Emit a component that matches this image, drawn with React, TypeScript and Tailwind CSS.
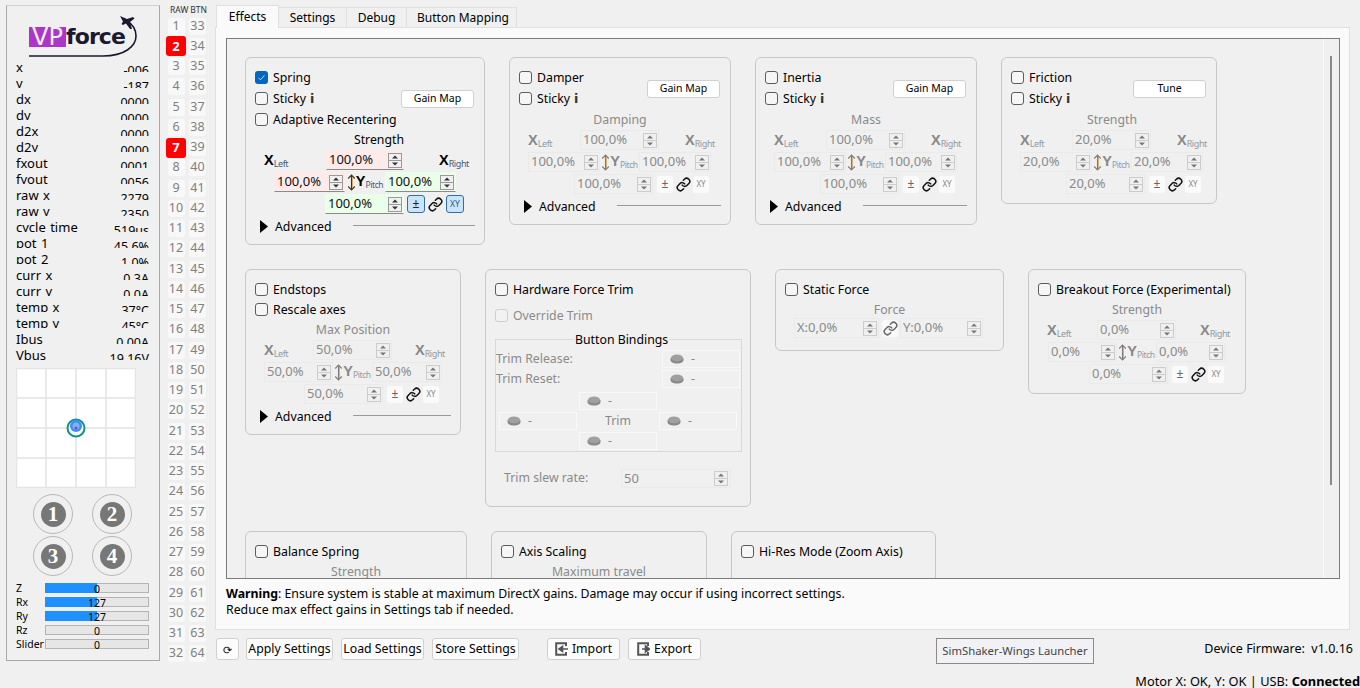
import React from "react";
import { Link } from "lucide-react";

const telemetry: [string, string][] = [
  ["x", "-006"], ["y", "-187"], ["dx", "0000"], ["dy", "0000"], ["d2x", "0000"], ["d2y", "0000"],
  ["fxout", "0001"], ["fyout", "0056"], ["raw x", "2279"], ["raw y", "2350"], ["cycle time", "519us"],
  ["pot 1", "45.6%"], ["pot 2", "1.0%"], ["curr x", "0.3A"], ["curr y", "0.0A"], ["temp x", "37°C"],
  ["temp y", "45°C"], ["Ibus", "0.00A"], ["Vbus", "19.16V"],
];

function Logo() {
  return (
    <div className="relative h-[50px] w-full">
      <svg className="absolute left-[20px] top-[8px]" width="120" height="46" viewBox="0 0 120 46">
        <path d="M2 42 H76 C98 42 109 32 109 22 C109 15 105 10 100 7" fill="none" stroke="#1c1830" strokeWidth="1.6" />
        <path d="M93 2 L100 5 L106 3 L107.5 4.5 L103 8 L105 15 L103 15 L99 9.5 L96 11 L94.5 10 L96 7.5 Z" fill="#1c1830" />
      </svg>
      <div className="absolute left-[22px] top-[21px] flex items-center">
        <span className="h-[20px] w-[37px] overflow-hidden bg-[#ad36c9] text-center font-['DejaVu_Sans'] text-[24px] leading-[20px] text-[#f0f0f0]">VP</span>
        <span className="font-['DejaVu_Sans'] text-[22px] font-bold leading-[20px] tracking-[-0.9px] text-[#1c1830]">force</span>
      </div>
    </div>
  );
}

function Sidebar() {
  const bars: [string, string, boolean][] = [["Z", "0", true], ["Rx", "127", true], ["Ry", "127", true], ["Rz", "0", false], ["Slider", "0", false]];
  return (
    <aside className="mt-[5px] ml-[6px] h-[656px] w-[154px] shrink-0 border border-[#a8a8a8] bg-[#f0f0f0] border-t-[#d0d0d0]">
      <Logo />
      {telemetry.map(([k, v]) => (
        <div key={k} className="flex h-[16px] justify-between overflow-hidden pl-[9px] pr-[10px] text-[13px] leading-[16px] text-black">
          <span className="mt-[3px] whitespace-pre [word-spacing:1px]">{k}</span>
          <span className="mt-[7px] text-[12.5px]">{v}</span>
        </div>
      ))}
      <svg className="mt-[8px] ml-[9px] block" width="120" height="120" viewBox="0 0 120 120">
        <rect width="120" height="120" fill="#fff" />
        <path d="M.5 0V120M30 0V120M60 0V120M90 0V120M119.5 0V120M0 .5H120M0 30H120M0 60H120M0 90H120M0 119.5H120" stroke="#e4e4e4" strokeWidth="1.5" fill="none" />
        <circle cx="60" cy="60" r="8.5" fill="#fff" stroke="#0f9488" strokeWidth="2" />
        <circle cx="60" cy="58" r="6" fill="#3b8cff" />
        <circle cx="60" cy="58" r="3.5" fill="#7fb2f5" />
        <circle cx="60" cy="60" r="1.5" fill="#7a4bb0" />
      </svg>
      <div className="mt-[6px] ml-[26px] grid w-[99px] grid-cols-[40px_40px] gap-x-[19px] gap-y-[2px]">
        {["1", "2", "3", "4"].map((n) => (
          <div key={n} className="flex h-[40px] w-[40px] items-center justify-center rounded-full border border-[#b8b8b8]">
            <span className="flex h-[25px] w-[25px] items-center justify-center rounded-full bg-[#777777] font-['Liberation_Serif'] text-[21px] font-bold leading-none text-[#ffffff]">{n}</span>
          </div>
        ))}
      </div>
      <div className="mt-[7px] flex flex-col gap-[4px] pl-[9px]">
        {bars.map(([k, v, on]) => (
          <div key={k} className="flex h-[10px] items-center text-[10.5px] text-black">
            <span className="mt-[2px] w-[29px]">{k}</span>
            <div className="relative h-[10px] w-[104px] border border-[#b4b4b4] bg-[#e6e6e6]">
              {on && <div className="absolute -left-px -top-px -bottom-px w-[52px] bg-[#1e90ff]" />}
              <span className="absolute inset-0 text-center text-[10.5px] leading-[10px]">{v}</span>
            </div>
          </div>
        ))}
      </div>
    </aside>
  );
}

function ButtonColumn() {
  const active = [2, 7];
  return (
    <div className="mt-[5px] ml-[6px] w-[44px] shrink-0">
      <div className="flex h-[9px] justify-between pl-[4px] pr-[3px] text-[8.5px] leading-[9px] text-[#333]">
        <span>RAW</span>
        <span>BTN</span>
      </div>
      <div className="mt-[3px] flex h-[646px] flex-col justify-between">
        {Array.from({ length: 32 }, (_, i) => i + 1).map((n) => (
          <div key={n} className="flex h-[18px] items-center">
            <div className="flex w-[20px] justify-center">
              {active.includes(n) ? (
                <span className="flex h-[20px] w-[20px] items-center justify-center rounded-[3px] bg-[#ff0000] text-[13px] font-bold text-white">{n}</span>
              ) : (
                <span className="flex h-[17px] w-[17px] items-center justify-center rounded-[3px] bg-[#f8f8f8] text-[12.5px] text-[#808080]">{n}</span>
              )}
            </div>
            <span className="ml-[3px] flex h-[17px] w-[17px] items-center justify-center rounded-[3px] bg-[#f8f8f8] text-[12.5px] text-[#808080]">{n + 32}</span>
          </div>
        ))}
      </div>
    </div>
  );
}

function Check({ label, checked, disabled, info, cls }: { label: string; checked?: boolean; disabled?: boolean; info?: boolean; cls?: string }) {
  return (
    <div className={`flex items-center pl-[9px] ${cls ?? "h-[21px]"}`}>
      {checked ? (
        <span className="flex h-[13px] w-[13px] items-center justify-center rounded-[3px] bg-[#0067c0]">
          <svg width="9" height="9" viewBox="0 0 9 9"><path d="M1.5 4.8L3.5 6.8L7.5 2.3" stroke="#cfe3f5" strokeWidth="0.9" fill="none" /></svg>
        </span>
      ) : (
        <span className={`h-[13px] w-[13px] rounded-[3px] border ${disabled ? "border-[#cfcfcf] bg-[#f2f2f2]" : "border-[#5c5c5c] bg-[#f6f6f6]"}`} />
      )}
      <span className={`ml-[5px] mt-[2px] whitespace-nowrap ${disabled ? "text-[#8a8a8a]" : "text-black"}`}>{label}</span>
      {info && <span className="ml-[4px] mt-[2px] font-['DejaVu_Sans'] text-[12.5px] font-bold leading-none text-[#333]">i</span>}
    </div>
  );
}

function Arrows({ on }: { on: boolean }) {
  const s = on ? "#9a9a9a" : "#cccccc";
  const f = on ? "#333333" : "#777777";
  return (
    <svg className="shrink-0" width="14" height="15" viewBox="0 0 14 15">
      <rect x="0.5" y="0.5" width="13" height="14" fill="#f0f0f0" stroke={s} />
      <path d="M0 7.5H14" stroke={s} />
      <path d="M4 5.5L7 2.5L10 5.5Z M4 9.5L7 12.5L10 9.5Z" fill={f} />
    </svg>
  );
}

function Spin({ value, w, tone, on }: { value: string; w: string; tone?: "red" | "green"; on: boolean }) {
  const bg = !on ? "bg-[#f0f0f0] border-[#eaeaea]" : tone === "red" ? "bg-[#ffeaea] border-b-[#8a8a8a] border-transparent" : "bg-[#eaffea] border-b-[#8a8a8a] border-transparent";
  return (
    <div className={`flex h-[20px] shrink-0 items-center justify-between border pl-[2px] pr-[1px] text-[13px] ${w} ${bg} ${on ? "text-[#111]" : "text-[#8a8a8a]"}`}>
      <span className="whitespace-nowrap">{value}</span>
      <Arrows on={on} />
    </div>
  );
}

function AxisMark({ letter, sub, on }: { letter: string; sub: string; on: boolean }) {
  return (
    <span className="whitespace-nowrap">
      <span className={`font-['Liberation_Sans'] text-[14.5px] font-bold leading-none ${on ? "text-black" : "text-[#888888]"}`}>{letter}</span>
      <span className={`relative top-[2px] tracking-[-0.4px] ${sub === "Pitch" ? "text-[8.5px]" : "text-[9px]"} ${on ? "text-[#3f5a78]" : "text-[#8e9aa6]"}`}>{sub}</span>
    </span>
  );
}

function UpDown({ on }: { on: boolean }) {
  const c = on ? "#3d3320" : "#7c7c7c";
  return (
    <svg width="9" height="17" viewBox="0 0 9 17" className="shrink-0">
      <path d="M4.5 2V15M1.2 4.5L4.5 1L7.8 4.5M1.2 12.5L4.5 16L7.8 12.5" stroke={c} strokeWidth="1.1" fill="none" />
      <path d="M5.5 3V14" stroke="#d8a050" strokeWidth="0.8" />
    </svg>
  );
}

function Chain({ color = "#111111" }: { color?: string }) {
  return <Link className="shrink-0" size={15} strokeWidth={2.4} color={color} />;
}

type GainCfg = {
  title: string; value: string; on: boolean;
  titleCls: string; xlCls: string; topW: string; xrCls: string;
  midCls: string; sideW: string; sideW2: string; slot: string;
  botCls: string; linkCls: string; rootCls?: string;
};

function Gains({ title, value, on, titleCls, xlCls, topW, xrCls, midCls, sideW, sideW2, slot, botCls, linkCls, rootCls }: GainCfg) {
  return (
    <div className={rootCls}>
      <div className={`h-[20px] text-center leading-[20px] ${titleCls} ${on ? "text-black" : "text-[#8a8a8a]"}`}>{title}</div>
      <div className="flex h-[20px] items-center">
        <div className={`pt-[3px] ${xlCls}`}><AxisMark letter="X" sub="Left" on={on} /></div>
        <Spin value={value} w={topW} tone="red" on={on} />
        <div className={`pt-[3px] ${xrCls}`}><AxisMark letter="X" sub="Right" on={on} /></div>
      </div>
      <div className={`mt-[2px] flex h-[20px] items-center ${midCls}`}>
        <Spin value={value} w={sideW} tone="red" on={on} />
        <div className={`flex items-center justify-center ${slot}`}>
          <UpDown on={on} />
          <AxisMark letter="Y" sub="Pitch" on={on} />
        </div>
        <Spin value={value} w={sideW2} tone="green" on={on} />
      </div>
      <div className={`mt-[2px] flex h-[20px] items-center ${botCls}`}>
        <Spin value={value} w="w-[79px]" tone="green" on={on} />
        {on ? (
          <span className="ml-[3px] flex h-[18px] w-[18px] items-center justify-center rounded-[3px] border border-[#2a6fb0] bg-[#cce4f7] text-[12px] text-[#222]">±</span>
        ) : (
          <span className="ml-[4px] flex h-[17px] w-[16px] items-center justify-center rounded-[3px] bg-[#fafafa] text-[12px] text-[#666]">±</span>
        )}
        <span className={`flex items-center ${linkCls}`}><Chain /></span>
        {on ? (
          <span className="flex h-[18px] w-[18px] items-center justify-center rounded-[3px] border border-[#2a6fb0] bg-[#cce4f7] text-[8.5px] text-[#2a5a8a]">XY</span>
        ) : (
          <span className="flex h-[17px] w-[16px] items-center justify-center rounded-[3px] bg-[#fafafa] text-[8px] text-[#888]">XY</span>
        )}
      </div>
    </div>
  );
}

function Advanced({ cls }: { cls: string }) {
  return (
    <div className={`flex h-[20px] items-center pl-[14px] pr-[9px] ${cls}`}>
      <svg width="8" height="13" viewBox="0 0 8 13" className="shrink-0 -mt-[2px]"><path d="M0 0L8 6.5L0 13Z" fill="#000" /></svg>
      <span className="ml-[7px] w-[78px] text-black">Advanced</span>
      <span className="-mt-[4px] h-px flex-1 bg-[#9a9a9a]" />
    </div>
  );
}

function GainBtn({ label, cls }: { label: string; cls?: string }) {
  return (
    <span className={`flex h-[18px] w-[73px] items-center justify-center rounded-[3px] border border-[#d0d0d0] bg-white text-[10.5px] text-black ${cls ?? ""}`}>{label}</span>
  );
}

function Group({ cls, children }: { cls: string; children: React.ReactNode }) {
  return <section className={`shrink-0 rounded-[6px] border border-[#c8c8c8] pt-[9px] ${cls}`}>{children}</section>;
}

function Small({ title, label, value, w, btn, adv }: { title: string; label: string; value: string; w: string; btn: string; adv: boolean }) {
  return (
    <Group cls={w}>
      <div className="flex items-center justify-between pr-[10px]">
        <div>
          <Check label={label} />
          <Check label="Sticky" info />
        </div>
        <GainBtn label={btn} cls="mt-[1px]" />
      </div>
      <Gains
        rootCls="mt-[1px]"
        title={title} value={value} on={false}
        titleCls="ml-[60px] w-[100px]" xlCls="ml-[18px] w-[52px]" topW="w-[79px]" xrCls="ml-[26px]"
        midCls="ml-[18px]" sideW="w-[72px]" sideW2="w-[72px]" slot="w-[39px]"
        botCls="ml-[64px]" linkCls="ml-[3px] mr-[2px]"
      />
      {adv && <Advanced cls="mt-[3px]" />}
    </Group>
  );
}

function BindBtn({ cls }: { cls?: string }) {
  return (
    <div className={`flex h-[18px] w-[78px] items-center border border-[#f8f8f8] pl-[7px] text-[#8a8a8a] ${cls ?? ""}`}>
      <svg width="14" height="10" viewBox="0 0 14 10"><path d="M.5 4V6C.5 8 3 9.5 7 9.5S13.5 8 13.5 6V4Z" fill="#8a8a8a" /><ellipse cx="7" cy="3.8" rx="6" ry="3.4" fill="#a0a0a0" /></svg>
      <span className="ml-[7px]">-</span>
    </div>
  );
}

function IconImport({ out }: { out?: boolean }) {
  return (
    <svg width="13" height="14" viewBox="0 0 13 14" className="shrink-0">
      <path d="M11 4V1.2H1.2V12.8H11V10" stroke="#555" strokeWidth="2" fill="none" />
      {out ? <path d="M5 7H10M8.5 4L12.5 7L8.5 10Z" stroke="#555" strokeWidth="1.6" fill="#555" /> : <path d="M7 7H13M7.5 4.5L4 7L7.5 9.5Z" stroke="#555" strokeWidth="1.6" fill="#555" />}
    </svg>
  );
}

function Btn({ cls, children }: { cls: string; children: React.ReactNode }) {
  return <span className={`flex h-[22px] shrink-0 items-center justify-center rounded-[3px] border border-[#d0d0d0] bg-[#fcfcfc] text-black ${cls}`}>{children}</span>;
}

function Effects() {
  return (
    <div className="relative h-[541px] w-[1114px] shrink-0 overflow-hidden border border-[#7a7a7a] bg-[#f0f0f0] pl-[18px] pt-[18px]">
      <div className="absolute bottom-0 left-[1096px] top-0 w-px bg-[#fafafa]" />
      <div className="absolute left-[1103px] top-[17px] h-[429px] w-[2px] bg-[#8a8a8a]" />
      <div className="flex items-start gap-[24px]">
        <Group cls="w-[240px] h-[188px]">
          <Check label="Spring" checked />
          <div className="flex items-center justify-between pr-[10px]">
            <Check label="Sticky" info />
            <GainBtn label="Gain Map" />
          </div>
          <Check label="Adaptive Recentering" />
          <Gains
            title="Strength" value="100,0%" on
            titleCls="ml-[83px] w-[100px]" xlCls="ml-[18px] w-[62px]" topW="w-[78px]" xrCls="ml-[35px]"
            midCls="ml-[28px]" sideW="w-[71px]" sideW2="w-[71px]" slot="w-[40px]"
            botCls="ml-[79px]" linkCls="ml-[3px] mr-[3px]"
          />
          <Advanced cls="mt-[3px]" />
        </Group>
        <Small title="Damping" label="Damper" value="100,0%" w="w-[222px] h-[168px]" btn="Gain Map" adv />
        <Small title="Mass" label="Inertia" value="100,0%" w="w-[222px] h-[168px]" btn="Gain Map" adv />
        <Small title="Strength" label="Friction" value="20,0%" w="w-[216px] h-[147px]" btn="Tune" adv={false} />
      </div>

      <div className="mt-[24px] flex items-start gap-[24px]">
        <Group cls="w-[216px] h-[166px]">
          <Check label="Endstops" cls="h-[20px]" />
          <Check label="Rescale axes" cls="h-[20px]" />
          <Gains
            rootCls="mt-[1px]"
            title="Max Position" value="50,0%" on={false}
            titleCls="ml-[57px] w-[100px]" xlCls="ml-[18px] w-[49px]" topW="w-[79px]" xrCls="ml-[23px]"
            midCls="ml-[18px]" sideW="w-[69px]" sideW2="w-[70px]" slot="w-[39px]"
            botCls="ml-[58px]" linkCls="ml-[3px] mr-[2px]"
          />
          <Advanced cls="mt-[3px]" />
        </Group>

        <Group cls="w-[266px] h-[238px]">
          <Check label="Hardware Force Trim" />
          <Check label="Override Trim" disabled cls="mt-[5px] h-[21px]" />
          <div className="relative ml-[9px] mt-[13px] h-[113px] w-[247px] border border-[#d8d8d8] pt-[9px] pr-px text-[#8a8a8a]">
            <span className="absolute left-[78px] -top-[9px] bg-[#f0f0f0] px-[1px] leading-[18px] text-black">Button Bindings</span>
            <div className="flex h-[20px] items-center justify-between"><span>Trim Release:</span><BindBtn /></div>
            <div className="flex h-[20px] items-center justify-between"><span>Trim Reset:</span><BindBtn /></div>
            <div className="mt-[3px] flex flex-col items-center">
              <BindBtn />
              <div className="mt-[2px] flex w-full items-center pl-[3px]">
                <BindBtn />
                <span className="w-[82px] text-center">Trim</span>
                <BindBtn />
              </div>
              <BindBtn cls="mt-[2px]" />
            </div>
          </div>
          <div className="mt-[17px] flex items-center pl-[18px] text-[#8a8a8a]">
            <span className="w-[117px]">Trim slew rate:</span>
            <div className="flex h-[19px] w-[110px] items-center justify-between border border-[#eaeaea] pl-[2px] pr-[2px] text-[13px]">
              <span>50</span>
              <Arrows on={false} />
            </div>
          </div>
        </Group>

        <Group cls="w-[229px] h-[82px]">
          <Check label="Static Force" />
          <div className="h-[18px] text-center leading-[20px] text-[#8a8a8a]">Force</div>
          <div className="ml-[18px] flex items-center">
            <Spin value="X:0,0%" w="w-[85px]" on={false} />
            <span className="ml-[3px] mr-[2px] flex h-[17px] w-[16px] items-center justify-center rounded-[3px] bg-[#fafafa]"><Chain color="#666666" /></span>
            <Spin value="Y:0,0%" w="w-[83px]" on={false} />
          </div>
        </Group>

        <Group cls="w-[218px] h-[125px]">
          <Check label="Breakout Force (Experimental)" />
          <Gains
            title="Strength" value="0,0%" on={false}
            titleCls="ml-[58px] w-[100px]" xlCls="ml-[18px] w-[50px]" topW="w-[79px]" xrCls="ml-[24px]"
            midCls="ml-[19px]" sideW="w-[69px]" sideW2="w-[69px]" slot="w-[39px]"
            botCls="ml-[60px]" linkCls="ml-[3px] mr-[2px]"
          />
        </Group>
      </div>

      <div className="mt-[24px] flex items-start gap-[24px]">
        <Group cls="w-[222px] h-[60px]">
          <Check label="Balance Spring" />
          <div className="mt-px text-center text-[#8a8a8a]">Strength</div>
        </Group>
        <Group cls="w-[216px] h-[60px]">
          <Check label="Axis Scaling" />
          <div className="mt-px text-center text-[#8a8a8a]">Maximum travel</div>
        </Group>
        <Group cls="w-[205px] h-[60px]">
          <Check label="Hi-Res Mode (Zoom Axis)" />
        </Group>
      </div>
    </div>
  );
}

export default function App() {
  const tabs: [string, string][] = [["Settings", "w-[68px]"], ["Debug", "w-[60px]"], ["Button Mapping", "w-[110px] pl-[3px]"]];
  return (
    <div className="flex h-[688px] w-[1360px] overflow-hidden bg-[#f0f0f0] font-['Noto_Sans',sans-serif] text-[12.3px] text-black">
      <Sidebar />
      <ButtonColumn />
      <main className="ml-[5px] w-[1145px] shrink-0 pt-[5px]">
        <div className="relative z-10 flex h-[23px] pl-px text-[12px]">
          <span className="flex h-[23px] w-[63px] items-center justify-center border border-b-0 border-[#e0e0e0] bg-[#fafafa] pb-[1px]">Effects</span>
          {tabs.map(([t, w]) => (
            <span key={t} className={`mt-[2px] flex h-[21px] items-center justify-center border border-l-0 border-[#e0e0e0] bg-[#f0f0f0] pt-[1px] ${w}`}>{t}</span>
          ))}
        </div>
        <div className="-mt-px h-[603px] w-[1135px] border border-[#e0e0e0] bg-[#fafafa] pl-[10px] pt-[10px]">
          <Effects />
          <div className="mt-[7px] leading-[16px]">
            <div><b>Warning</b>: Ensure system is stable at maximum DirectX gains. Damage may occur if using incorrect settings.</div>
            <div>Reduce max effect gains in Settings tab if needed.</div>
          </div>
        </div>
        <div className="mt-[8px] flex h-[27px] w-[1135px] items-start pl-px">
          <Btn cls="w-[23px]"><span className="text-[11px] leading-none">⟳</span></Btn>
          <Btn cls="ml-[7px] w-[87px]">Apply Settings</Btn>
          <Btn cls="ml-[8px] w-[83px]">Load Settings</Btn>
          <Btn cls="ml-[8px] w-[87px]">Store Settings</Btn>
          <Btn cls="ml-[28px] w-[73px] gap-[4px]"><IconImport />Import</Btn>
          <Btn cls="ml-[8px] w-[73px] gap-[4px]"><IconImport out />Export</Btn>
          <span className="ml-[235px] flex h-[26px] w-[158px] items-center justify-center border border-[#8a8a8a] bg-[#f2f2f6] text-[11.3px] text-[#444]">SimShaker-Wings Launcher</span>
          <span className="ml-auto mr-[-3px] mt-[2px] whitespace-pre text-[12.5px] leading-[18px]">Device Firmware:  v1.0.16</span>
        </div>
        <div className="mt-[8px] whitespace-nowrap text-right text-[12.8px] leading-[16px]">Motor X: OK, Y: OK | USB: <b>Connected</b></div>
      </main>
    </div>
  );
}
